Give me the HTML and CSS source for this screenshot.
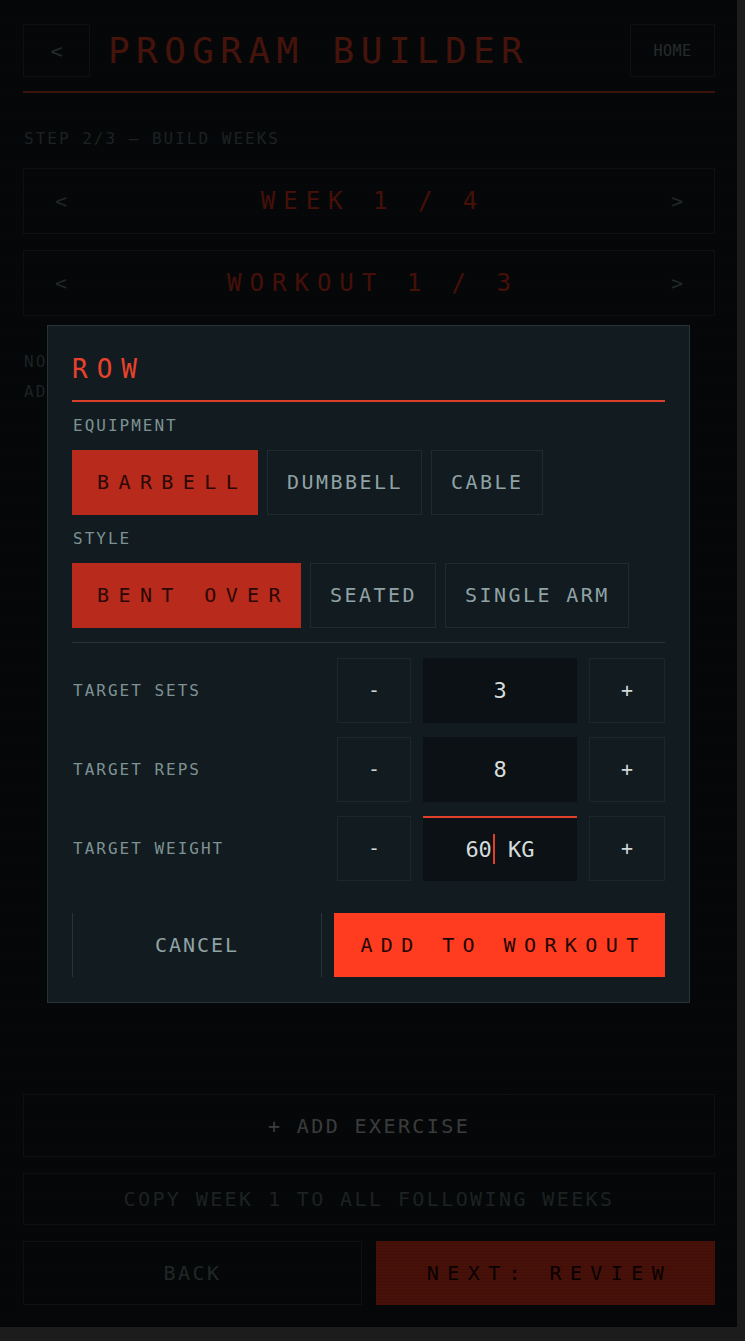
FILE: index.html
```html
<!DOCTYPE html>
<html lang="en">
<head>
    <meta charset="UTF-8">
    <meta name="viewport" content="width=device-width, initial-scale=1.0">
    <title>Program Builder</title>
    <link rel="stylesheet" href="styles.css">
</head>
<body>
    <div class="app">
        <header class="top-bar">
            <button class="back-icon">&lt;</button>
            <h1>PROGRAM BUILDER</h1>
            <button class="home-btn">HOME</button>
        </header>

        <p class="step">STEP 2/3 — BUILD WEEKS</p>

        <div class="pager">
            <button class="pager-arrow">&lt;</button>
            <span class="pager-label">WEEK 1 / 4</span>
            <button class="pager-arrow">&gt;</button>
        </div>
        <div class="pager">
            <button class="pager-arrow">&lt;</button>
            <span class="pager-label">WORKOUT 1 / 3</span>
            <button class="pager-arrow">&gt;</button>
        </div>

        <p class="empty">NO EXERCISES YET.<br>ADD ONE BELOW.</p>

        <div class="bottom-actions">
            <button class="add-exercise">+ ADD EXERCISE</button>
            <button class="copy-week">COPY WEEK 1 TO ALL FOLLOWING WEEKS</button>
            <div class="nav-row">
                <button class="back-btn">BACK</button>
                <button class="next-btn">NEXT: REVIEW</button>
            </div>
        </div>

        <!-- exercise editor dialog -->
        <div class="overlay">
            <div class="modal">
                <h2 class="modal-title">ROW</h2>

                <div class="field-label">EQUIPMENT</div>
                <div class="options">
                    <button class="option active">BARBELL</button>
                    <button class="option">DUMBBELL</button>
                    <button class="option">CABLE</button>
                </div>

                <div class="field-label">STYLE</div>
                <div class="options">
                    <button class="option active">BENT OVER</button>
                    <button class="option">SEATED</button>
                    <button class="option">SINGLE ARM</button>
                </div>

                <div class="divider"></div>

                <div class="targets">
                    <div class="target-row">
                        <span class="target-label">TARGET SETS</span>
                        <button class="step-btn">-</button>
                        <div class="target-value">3</div>
                        <button class="step-btn">+</button>
                    </div>
                    <div class="target-row">
                        <span class="target-label">TARGET REPS</span>
                        <button class="step-btn">-</button>
                        <div class="target-value">8</div>
                        <button class="step-btn">+</button>
                    </div>
                    <div class="target-row">
                        <span class="target-label">TARGET WEIGHT</span>
                        <button class="step-btn">-</button>
                        <div class="target-value editing">60<span class="caret"></span> KG</div>
                        <button class="step-btn">+</button>
                    </div>
                </div>

                <div class="modal-actions">
                    <button class="cancel-btn">CANCEL</button>
                    <button class="confirm-btn">ADD TO WORKOUT</button>
                </div>
            </div>
        </div>
    </div>
</body>
</html>
```

FILE: styles.css
```css
body {
    margin: 0;
    background-color: #1c1c1c;
    font-family: "DejaVu Sans Mono", monospace;
    color: #c9d4d4;
}
button {
    font-family: inherit;
    background: none;
    border: none;
    color: inherit;
    padding: 0;
    cursor: pointer;
}
.app {
    position: relative;
    width: 737px;
    height: 1327px;
    box-sizing: border-box;
    padding: 24px 22px 22px 23px;
    display: flex;
    flex-direction: column;
    background-color: #121b1f;
}

/* header */
.top-bar {
    display: flex;
    align-items: center;
    padding-bottom: 14px;
    border-bottom: 2px solid #d8402c;
}
.back-icon {
    width: 67px;
    height: 53px;
    border: 1px solid #2e3e44;
    color: #8a9ea0;
    font-size: 20px;
}
.top-bar h1 {
    margin: 0 0 0 18px;
    font-size: 36px;
    font-weight: normal;
    letter-spacing: 6.4px;
    color: #ff4a2c;
}
.home-btn {
    margin-left: auto;
    width: 85px;
    height: 53px;
    border: 1px solid #2e3e44;
    color: #8a9ea0;
    font-size: 15px;
    letter-spacing: 0.5px;
}
.step {
    margin: 36px 0 19px 1px;
    font-size: 16px;
    line-height: 20px;
    letter-spacing: 2px;
    color: #6a7c80;
}

/* week / workout pagers */
.pager {
    display: flex;
    align-items: center;
    height: 64px;
    border: 1px solid #2e3e44;
    margin-bottom: 16px;
}
.pager-arrow {
    width: 74px;
    height: 100%;
    color: #7a8e90;
    font-size: 20px;
}
.pager-label {
    flex: 1;
    text-align: center;
    font-size: 24px;
    letter-spacing: 8px;
    padding-left: 8px;
    color: #ff3b20;
}
.empty {
    margin: 15px 0 0 1px;
    font-size: 16px;
    line-height: 30px;
    letter-spacing: 2px;
    color: #6a7c80;
}

/* bottom actions */
.bottom-actions {
    margin-top: auto;
    display: flex;
    flex-direction: column;
    gap: 16px;
}
.add-exercise, .copy-week, .back-btn {
    border: 1px solid #2e3e44;
    font-size: 20px;
    letter-spacing: 2.4px;
}
.add-exercise {
    height: 63px;
    color: #d2dcdc;
}
.copy-week {
    height: 52px;
    color: #6a7a7e;
}
.nav-row {
    display: grid;
    grid-template-columns: 1fr 1fr;
    gap: 14px;
}
.back-btn {
    height: 64px;
    color: #7a8e90;
}
.next-btn {
    height: 64px;
    background-color: #ff3b20;
    color: #1e0503;
    font-size: 20px;
    letter-spacing: 8.4px;
    padding-left: 8px;
}

/* dim layer with scanlines + dialog */
.overlay {
    position: absolute;
    inset: 0;
    display: flex;
    align-items: center;
    justify-content: center;
    background:
        repeating-linear-gradient(to bottom, rgba(0, 0, 0, 0.08) 0 1px, transparent 1px 3px),
        rgba(0, 0, 0, 0.72);
}
.modal {
    width: 643px;
    box-sizing: border-box;
    padding: 28px 24px 25px 24px;
    background-color: #121b1f;
    border: 1px solid #26343a;
}
.modal-title {
    margin: 0;
    font-size: 26px;
    line-height: 30px;
    font-weight: normal;
    letter-spacing: 9px;
    color: #e8422c;
    padding-bottom: 16px;
    border-bottom: 2px solid #d8402c;
}
.field-label {
    margin: 14px 0 14px 1px;
    font-size: 16px;
    line-height: 20px;
    letter-spacing: 2px;
    color: #7d9294;
}
.options {
    display: flex;
    gap: 9px;
}
.option {
    height: 65px;
    padding: 0 18px 0 19px;
    border: 1px solid #1e2c32;
    font-size: 20px;
    letter-spacing: 2.45px;
    color: #8fa3a5;
}
.option.active {
    padding: 0 10px 0 24px;
    border-color: #b72a1c;
    background-color: #b72a1c;
    color: #2a0805;
    letter-spacing: 9.4px;
}
.divider {
    margin-top: 14px;
    border-top: 1px solid #26343a;
}
.targets {
    margin-top: 15px;
    display: flex;
    flex-direction: column;
    gap: 14px;
}
.target-row {
    display: grid;
    grid-template-columns: 1fr 74px 154px 76px;
    column-gap: 12px;
    align-items: center;
    height: 65px;
}
.target-label {
    padding-left: 1px;
    font-size: 16px;
    letter-spacing: 2px;
    color: #7d9294;
}
.step-btn {
    height: 100%;
    border: 1px solid #1a272c;
    font-size: 20px;
    color: #d0d8d8;
}
.target-value {
    height: 100%;
    display: flex;
    align-items: center;
    justify-content: center;
    background-color: #0b1114;
    font-size: 22px;
    color: #d4dcdc;
    white-space: pre;
}
.target-value.editing {
    box-sizing: border-box;
    border-top: 2px solid #e0402a;
}
.caret {
    display: inline-block;
    width: 2px;
    height: 30px;
    margin-left: 1px;
    background-color: #e0402a;
}
.modal-actions {
    display: grid;
    grid-template-columns: 250px 1fr;
    gap: 12px;
    margin-top: 32px;
}
.cancel-btn {
    height: 64px;
    border-left: 1px solid #26343a;
    border-right: 1px solid #26343a;
    font-size: 20px;
    letter-spacing: 2px;
    color: #8fa3a5;
}
.confirm-btn {
    height: 64px;
    background-color: #ff3b20;
    color: #1e0503;
    font-size: 20px;
    letter-spacing: 8.4px;
    padding-left: 8px;
}
```
